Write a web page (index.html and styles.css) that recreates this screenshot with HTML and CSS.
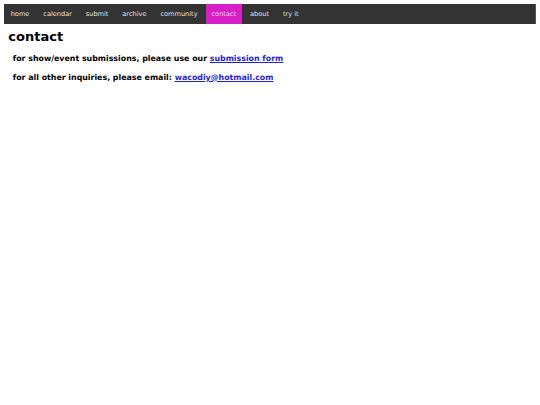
FILE: index.html
```html
<!DOCTYPE html>
<html>
<head>
<meta charset="utf-8">
<title>contact</title>
<link rel="stylesheet" href="styles.css">
</head>
<body>
<nav class="topnav">
  <a class="nav-link" href="#">home</a>
  <a class="nav-link" href="#">calendar</a>
  <a class="nav-link" href="#">submit</a>
  <a class="nav-link" href="#">archive</a>
  <a class="nav-link" href="#">community</a>
  <a class="nav-link active" href="#">contact</a>
  <a class="nav-link" href="#">about</a>
  <a class="nav-link" href="#">try it</a>
</nav>
<h1 class="page-title">contact</h1>
<div class="content">
  <p class="line">for show/event submissions, please use our <a class="text-link" href="#">submission form</a></p>
  <p class="line">for all other inquiries, please email: <a class="text-link" href="#">wacodiy@hotmail.com</a></p>
</div>
</body>
</html>
```
FILE: styles.css
```css
html, body {
  background: #ffffff;
}
body {
  margin: 4px;
  font-family: "DejaVu Sans", Verdana, sans-serif;
  color: #000;
}
.topnav {
  display: flex;
  align-items: stretch;
  gap: 2.7px;
  height: 20px;
  padding-left: 1.1px;
  background: #333333;
  box-shadow: inset -1px 0 0 #555555;
}
.nav-link {
  display: flex;
  align-items: center;
  padding: 0 5.6px;
  font-size: 6.6px;
  color: #e2e2e2;
  text-decoration: none;
}
.nav-link.active {
  background: #d81ec6;
  color: #f6d4f1;
}
.page-title {
  margin: 5px 0 0 4.3px;
  font-size: 13px;
  line-height: 15px;
  font-weight: bold;
}
.content {
  display: flex;
  flex-direction: column;
  gap: 9px;
  padding: 9.7px 0 0 8.8px;
}
.line {
  margin: 0;
  font-size: 7.87px;
  line-height: 10px;
  font-weight: bold;
}
.text-link {
  color: #1f1fd6;
  text-decoration: underline;
}
```
